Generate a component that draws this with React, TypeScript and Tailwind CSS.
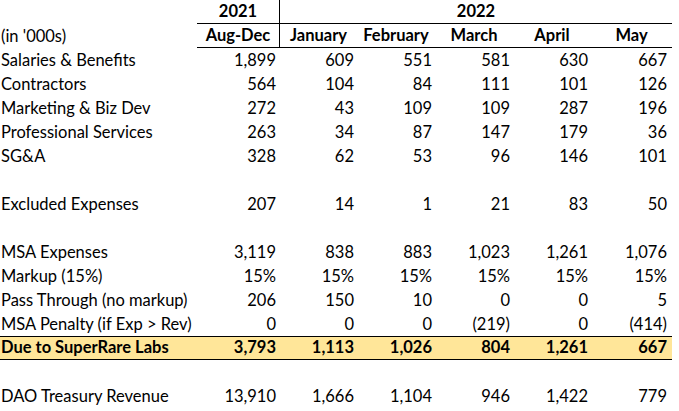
import React from 'react';

type Row = { label: string; values: string[]; kind?: 'blank' | 'total' };

const rows: Row[] = [
  { label: 'Salaries & Benefits', values: ['1,899', '609', '551', '581', '630', '667'] },
  { label: 'Contractors', values: ['564', '104', '84', '111', '101', '126'] },
  { label: 'Marketing & Biz Dev', values: ['272', '43', '109', '109', '287', '196'] },
  { label: 'Professional Services', values: ['263', '34', '87', '147', '179', '36'] },
  { label: 'SG&A', values: ['328', '62', '53', '96', '146', '101'] },
  { label: '', values: [], kind: 'blank' },
  { label: 'Excluded Expenses', values: ['207', '14', '1', '21', '83', '50'] },
  { label: '', values: [], kind: 'blank' },
  { label: 'MSA Expenses', values: ['3,119', '838', '883', '1,023', '1,261', '1,076'] },
  { label: 'Markup (15%)', values: ['15%', '15%', '15%', '15%', '15%', '15%'] },
  { label: 'Pass Through (no markup)', values: ['206', '150', '10', '0', '0', '5'] },
  { label: 'MSA Penalty (if Exp > Rev)', values: ['0', '0', '0', '(219)', '0', '(414)'] },
  { label: 'Due to SuperRare Labs', values: ['3,793', '1,113', '1,026', '804', '1,261', '667'], kind: 'total' },
  { label: '', values: [], kind: 'blank' },
  { label: 'DAO Treasury Revenue', values: ['13,910', '1,666', '1,104', '946', '1,422', '779'] },
];

const months = ['January', 'February', 'March', 'April', 'May'];

const cols = 'grid grid-cols-[197px_82px_78px_78px_78px_78px_81px]';

export default function App() {
  return (
    <div className="w-[679px] h-[411px] bg-white text-black text-[16.5px] leading-[20px] font-['Lato','Open_Sans',sans-serif] overflow-hidden">
      {/* year header */}
      <div className={cols + ' h-[24px]'}>
        <div />
        <div className="flex items-end justify-center pb-[2px] font-bold border-b border-black">2021</div>
        <div className="col-span-5 flex items-end justify-center pb-[2px] font-bold border-b border-l border-black">2022</div>
      </div>
      {/* month header */}
      <div className={cols + ' h-[24px]'}>
        <div className="flex items-end pl-[1px] pb-[2px]">(in '000s)</div>
        <div className="flex items-end justify-center pb-[2px] font-bold border-b border-black">Aug-Dec</div>
        {months.map((m, i) => (
          <div
            key={m}
            className={
              'flex items-end justify-center pb-[2px] font-bold border-b border-black' + (i === 0 ? ' border-l' : '')
            }
          >
            {m}
          </div>
        ))}
      </div>
      {rows.map((r, i) => (
        <div
          key={i}
          className={
            cols +
            ' h-[24px] w-[672px]' +
            (r.kind === 'total' ? ' bg-[#ffe699] font-bold border-y border-black' : '')
          }
        >
          <div className="flex items-end pl-[1px] pb-[2px] whitespace-nowrap">{r.label}</div>
          {r.values.map((v, j) => (
            <div key={j} className={'flex items-end justify-end pb-[2px] ' + (j === 5 ? 'pr-[5px]' : 'pr-[3px]')}>
              {v}
            </div>
          ))}
        </div>
      ))}
    </div>
  );
}
